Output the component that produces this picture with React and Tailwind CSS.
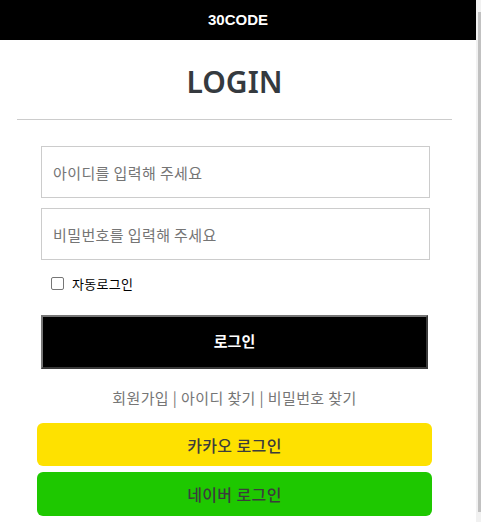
import React, { useState } from 'react'

const KR = { fontFamily: '"Malgun Gothic", "Noto Sans CJK KR", "Noto Sans", sans-serif' }

export default function App() {
  const [id, setId] = useState('')
  const [pw, setPw] = useState('')
  const [auto, setAuto] = useState(false)

  return (
    <div className="flex h-[522px] w-[481px] overflow-hidden bg-white" style={KR}>
      <div className="w-[476px]">
        {/* header */}
        <header className="flex h-[40px] items-center justify-center bg-black">
          <p className="text-[15px] font-bold text-white" style={{ fontFamily: '"Liberation Sans", Arial, sans-serif' }}>
            30CODE
          </p>
        </header>

        <section className="ml-[17px] w-[435px] pb-[30px]">
          <h1
            className="mt-[20px] text-center text-[30px] leading-[44px] font-semibold text-[#353a3f]"
            style={{ fontFamily: '"Noto Sans", "Open Sans", sans-serif' }}
          >
            LOGIN
          </h1>
          <div className="mt-[15px] h-px bg-[#cccccc]" />

          <div className="mt-[26px] flex flex-col gap-[10px] pl-[24px]">
            <input
              value={id}
              onChange={(e) => setId(e.target.value)}
              placeholder="아이디를 입력해 주세요"
              className="h-[52px] w-[389px] border border-[#cccccc] px-[11px] text-[15px] tracking-[0.4px] text-black outline-none placeholder:text-[#757575]"
              style={KR}
            />
            <input
              type="password"
              value={pw}
              onChange={(e) => setPw(e.target.value)}
              placeholder="비밀번호를 입력해 주세요"
              className="h-[52px] w-[389px] border border-[#cccccc] px-[11px] text-[15px] tracking-[0.4px] text-black outline-none placeholder:text-[#757575]"
              style={KR}
            />
          </div>

          <label className="mt-[14px] ml-[34px] flex items-center gap-[8px] text-[13px] tracking-[0.3px] text-black">
            <input
              type="checkbox"
              checked={auto}
              onChange={(e) => setAuto(e.target.checked)}
              className="h-[13px] w-[13px] appearance-none rounded-[2px] border border-[#767676] bg-white"
            />
            자동로그인
          </label>

          <button
            className="mt-[21px] ml-[24px] h-[54px] w-[387px] border-2 border-t-[#767676] border-l-[#767676] border-r-[#3a3a3a] border-b-[#3a3a3a] bg-black text-[15px] font-bold text-white"
            style={KR}
          >
            로그인
          </button>

          <p className="mt-[18px] text-center text-[15px] tracking-[0.4px] text-[#767676]">
            회원가입 | 아이디 찾기 | 비밀번호 찾기
          </p>

          <div className="mt-[14px] flex flex-col gap-[6px] pl-[20px]">
            <button
              className="h-[43px] w-[395px] rounded-[6px] bg-[#fee100] text-[16px] font-medium tracking-[0.4px] text-[#3c3c3c]"
              style={KR}
            >
              카카오 로그인
            </button>
            <button
              className="h-[44px] w-[395px] rounded-[6px] bg-[#1ec800] text-[16px] font-medium tracking-[0.4px] text-[#3c3c3c]"
              style={KR}
            >
              네이버 로그인
            </button>
          </div>
        </section>
      </div>

      {/* scrollbar */}
      <div className="flex w-[5px] bg-[#f1f1f1] pt-[12px] pb-[10px] pl-[2px]">
        <div className="w-[3px] bg-[#c1c1c1]" />
      </div>
    </div>
  )
}
